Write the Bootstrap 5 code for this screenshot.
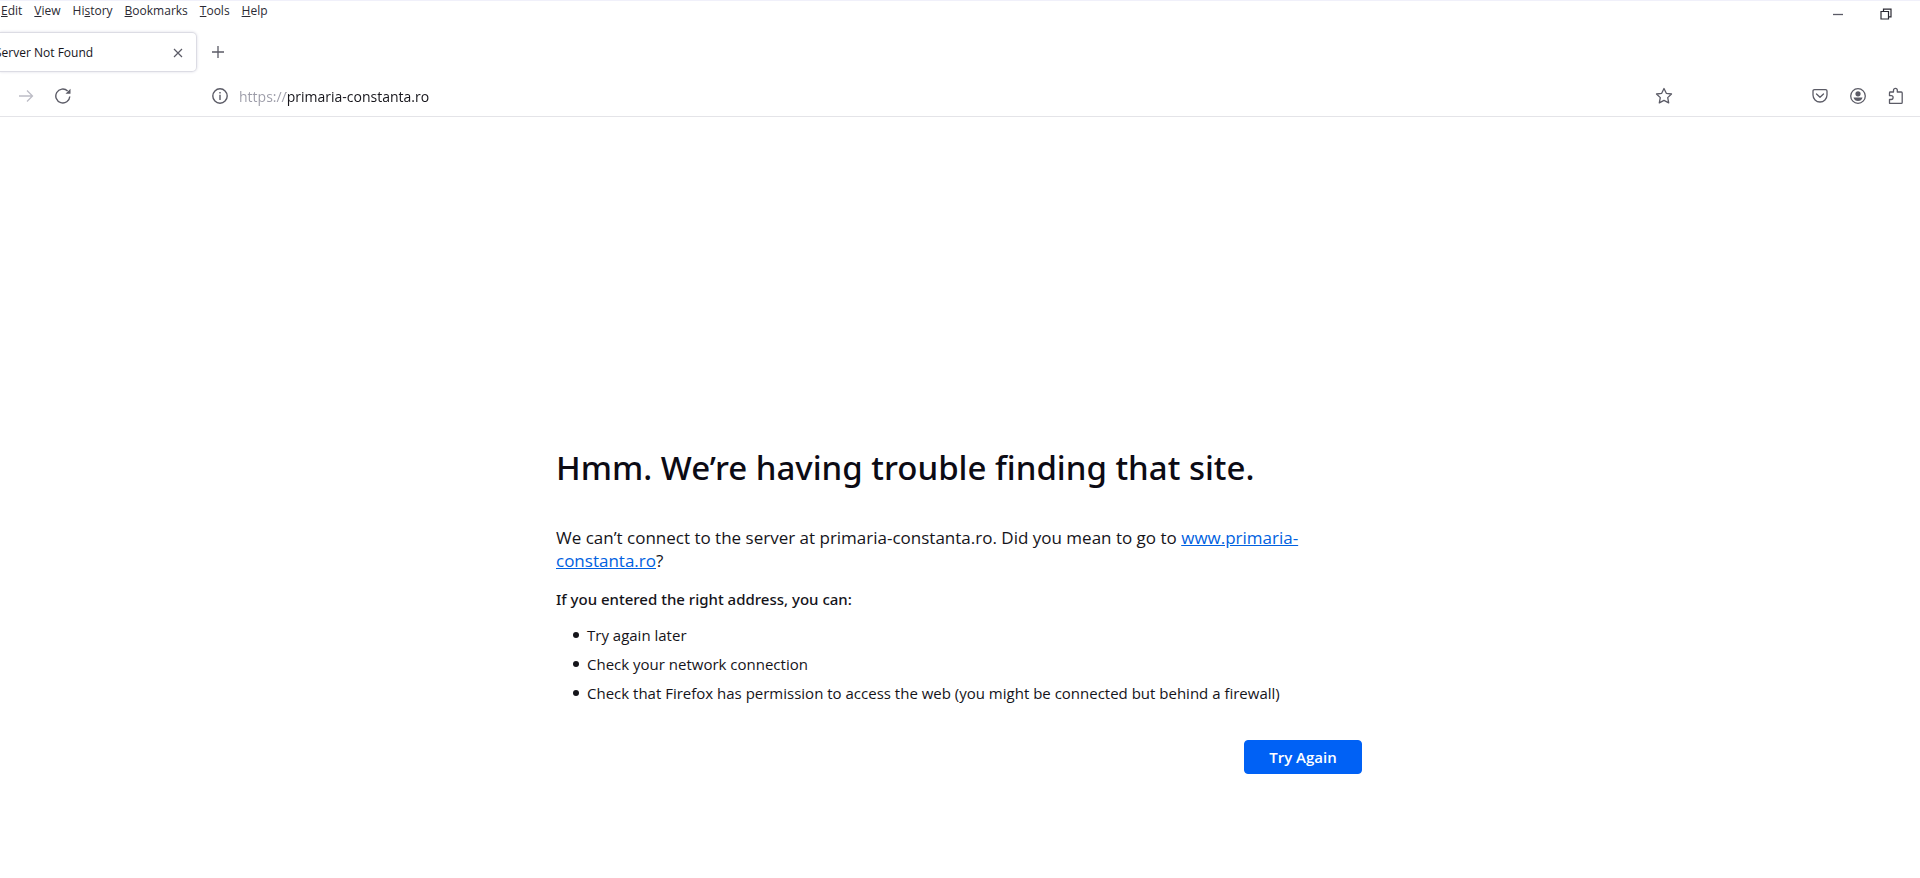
<!DOCTYPE html>
<html lang="en">
<head>
<meta charset="utf-8">
<meta name="viewport" content="width=device-width, initial-scale=1">
<title>Server Not Found</title>
<link href="https://cdn.jsdelivr.net/npm/bootstrap@5.3.0/dist/css/bootstrap.min.css" rel="stylesheet">
<style>
  body { font-family: "Open Sans", "Noto Sans", sans-serif; color: #15141a; background: #fff; overflow-x: hidden; }
  button { font-family: inherit; }
  svg { display: block; }
  .menu-bar { height: 32px; font-size: 12px; line-height: 20px; border-top: 1px solid #f0f0fa; color: #2b2a33; }
  .menu-bar .menus { gap: 12px; padding-left: 1px; }
  .menu-bar a { color: inherit; text-decoration: none; }
  .window-controls { gap: 36px; padding: 7px 28px 0 0; }
  .plain-btn { background: none; border: 0; padding: 0; color: #5b5b66; }
  .tab-strip { height: 40px; }
  .page-tab { width: 197px; height: 40px; font-size: 12px; padding: 1px 13px 0 0; border: 1px solid #dcdce4; border-left: 0; border-radius: 0 5px 5px 0; box-shadow: 0 0 3px #dcdce4; }
  .page-tab .title { margin-left: -5px; }
  .new-tab { margin-left: 14px; }
  .toolbar { height: 45px; border-bottom: 1px solid #e4e4e8; padding: 3px 15px 0 16px; }
  .nav-keys { gap: 19px; width: 195px; }
  .url-text { border: 0; outline: 0; padding: 2px 0 0; margin-left: 10px; height: 24px; font-size: 14px; --scheme: 47px;
    color: transparent; caret-color: #15141a;
    background: linear-gradient(90deg, #9c9ca8 var(--scheme), #15141a var(--scheme)) text; -webkit-background-clip: text; }
  .extras { gap: 20px; margin-left: 138px; }
  .error-page { padding: 321px 2px 40px 0; }
  .error-box { max-width: 806px; }
  .error-box h1 { font-family: "Noto Sans", "Open Sans", sans-serif; font-size: 33px; line-height: 60px; font-weight: 500; margin-bottom: 28px; color: #0c0b14; }
  .error-box .intro { font-size: 17px; line-height: 23px; margin-bottom: 15px; }
  .error-box .intro a { color: #0061e0; }
  .error-box .hint { font-family: "Noto Sans", "Open Sans", sans-serif; font-size: 15px; line-height: 24px; font-weight: 500; margin-bottom: 12px; }
  .error-box ul { font-size: 15px; line-height: 24px; padding-left: 17px; margin-bottom: 35px; }
  .error-box li { display: flex; align-items: center; gap: 8px; margin-bottom: 5px; }
  .error-box li::before { content: ""; width: 6px; height: 6px; border-radius: 50%; background: #15141a; }
  .retry { width: 118px; height: 34px; padding: 0; font-size: 15px; font-weight: 600; border-radius: 4px; --bs-btn-bg: #0061f5; --bs-btn-border-color: #0061f5; }
</style>
</head>
<body>
<header>
  <div class="menu-bar d-flex justify-content-between">
    <nav class="menus d-flex" aria-label="Menu bar">
      <a href="#"><u>E</u>dit</a><a href="#"><u>V</u>iew</a><a href="#">Hi<u>s</u>tory</a><a href="#"><u>B</u>ookmarks</a><a href="#"><u>T</u>ools</a><a href="#"><u>H</u>elp</a>
    </nav>
    <div class="window-controls d-flex align-items-start">
      <button class="plain-btn" aria-label="Minimize"><svg width="12" height="12" viewBox="0 0 12 12"><path d="M1 6.500h10" stroke="currentColor" stroke-width="1.300"/></svg></button>
      <button class="plain-btn" aria-label="Restore"><svg width="12" height="12" viewBox="0 0 12 12" fill="none" stroke="#2b2a33" stroke-width="1.200"><path d="M1 3.500h7.500V11H1zM3.500 3.500V1.200H11V8.800H8.500"/></svg></button>
    </div>
  </div>
  <div class="tab-strip d-flex align-items-center">
    <div class="page-tab d-flex align-items-center justify-content-between">
      <span class="title">Server Not Found</span>
      <button class="plain-btn" aria-label="Close tab"><svg width="10" height="10" viewBox="0 0 10 10"><path d="M1 1l8 8M9 1L1 9" stroke="currentColor" stroke-width="1.200"/></svg></button>
    </div>
    <button class="plain-btn new-tab" aria-label="New tab"><svg width="14" height="14" viewBox="0 0 14 14"><path d="M7 1v12M1 7h12" stroke="currentColor" stroke-width="1.300"/></svg></button>
  </div>
  <div class="toolbar d-flex align-items-center">
    <div class="nav-keys d-flex align-items-center">
      <button class="plain-btn" aria-label="Forward"><svg width="20" height="16" viewBox="0 0 20 16" fill="none" stroke="#bdbdc6" stroke-width="1.300"><path d="M3 8h13.500M11 2.500L16.500 8L11 13.500"/></svg></button>
      <button class="plain-btn" aria-label="Reload"><svg width="16" height="16" viewBox="0 0 16 16" fill="none" stroke="currentColor" stroke-width="1.400"><path d="M14.800 8.500A7 7 0 1 1 12.600 2.900"/><path d="M15.500 .8v5h-5z" fill="currentColor" stroke="none"/></svg></button>
    </div>
    <button class="plain-btn" aria-label="Site information"><svg width="18" height="18" viewBox="0 0 18 18" fill="none" stroke="currentColor" stroke-width="1.400"><circle cx="9" cy="9" r="7.200"/><path d="M9 7.800V13M9 5v1.500"/></svg></button>
    <input class="url-text flex-grow-1" type="text" aria-label="Address" value="https://primaria-constanta.ro" spellcheck="false">
    <button class="plain-btn" aria-label="Bookmark this page"><svg width="18" height="18" viewBox="0 0 18 18" fill="none" stroke="currentColor" stroke-width="1.300" stroke-linejoin="round"><path d="M9 1.500l2.300 4.800 5.200.7-3.800 3.600 1 5.300L9 13.400l-4.700 2.500 1-5.300L1.500 7l5.200-.7z"/></svg></button>
    <div class="extras d-flex">
      <button class="plain-btn" aria-label="Save to Pocket"><svg width="18" height="18" viewBox="0 0 18 18" fill="none" stroke="currentColor" stroke-width="1.300" stroke-linecap="round" stroke-linejoin="round"><path d="M3.500 2.600h11q1.500 0 1.500 1.500V8a7 7 0 0 1-14 0V4.100q0-1.500 1.500-1.500z"/><path d="M5.500 7L9 10.300 12.500 7"/></svg></button>
      <button class="plain-btn" aria-label="Account"><svg width="18" height="18" viewBox="0 0 18 18"><circle cx="9" cy="9" r="7.300" fill="none" stroke="currentColor" stroke-width="1.300"/><circle cx="9" cy="6.800" r="2.600" fill="currentColor"/><path d="M4.500 10.500h9q-1 3.500-4.500 3.500t-4.500-3.500z" fill="currentColor"/></svg></button>
      <button class="plain-btn" aria-label="Extensions"><svg width="18" height="18" viewBox="0 0 18 18" fill="none" stroke="currentColor" stroke-width="1.300" stroke-linejoin="round"><path d="M2.500 16.300V12.500h1.700a1.900 1.900 0 0 0 0-3.800H2.500V5.800q0-.8.800-.8H6.500V3.200a1.900 1.900 0 0 1 3.800 0V5h4q.9 0 .9.900v9.500q0 .9-.9.900z"/></svg></button>
    </div>
  </div>
</header>
<main class="error-page">
  <div class="error-box mx-auto">
    <h1>Hmm. We’re having trouble finding that site.</h1>
    <p class="intro">We can’t connect to the server at primaria-constanta.ro. Did you mean to go to <a href="#">www.primaria-constanta.ro</a>?</p>
    <p class="hint">If you entered the right address, you can:</p>
    <ul>
      <li>Try again later</li>
      <li>Check your network connection</li>
      <li>Check that Firefox has permission to access the web (you might be connected but behind a firewall)</li>
    </ul>
    <div class="d-flex justify-content-end"><button class="btn btn-primary retry">Try Again</button></div>
  </div>
</main>
<script src="https://cdn.jsdelivr.net/npm/bootstrap@5.3.0/dist/js/bootstrap.bundle.min.js"></script>
</body>
</html>
